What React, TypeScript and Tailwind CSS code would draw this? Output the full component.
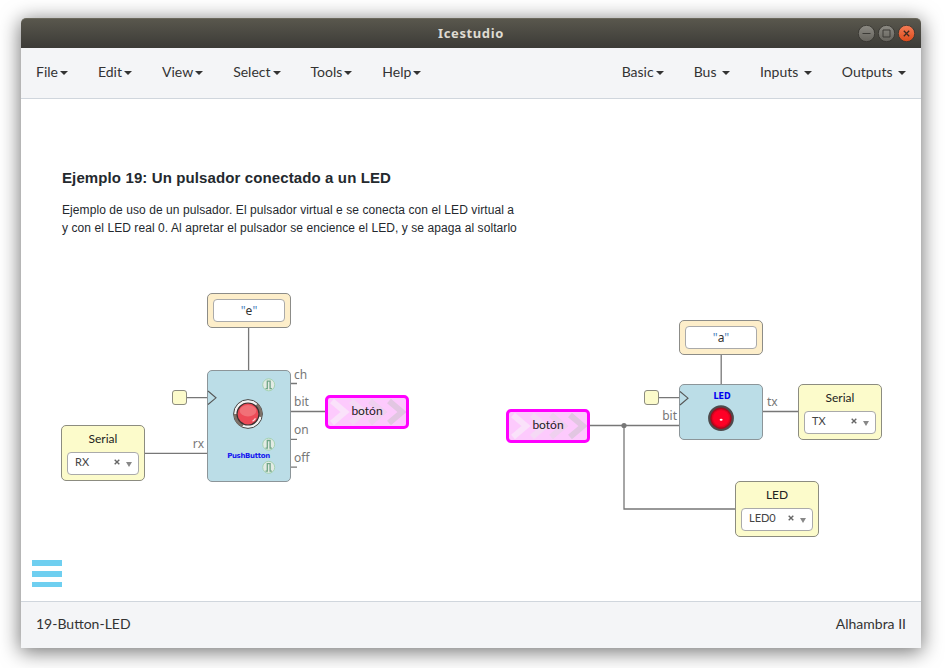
import React from "react";
import clsx from "clsx";

const lato = "font-['Lato','Liberation_Sans',sans-serif]";
const noto = "font-['Noto_Sans','Open_Sans',sans-serif]";

function Caret({ className }: { className?: string }) {
  return (
    <span
      className={clsx(
        "mt-[2px] h-0 w-0 border-x-4 border-t-4 border-x-transparent border-t-[#333]",
        className,
      )}
    />
  );
}

function MenuItem({ label, spaced }: { label: string; spaced?: boolean }) {
  return (
    <li className="flex items-center">
      <span>{label}</span>
      <Caret className={spaced ? "ml-[5.5px]" : "ml-[2px]"} />
    </li>
  );
}

function TitleBar() {
  return (
    <header className="relative flex h-[30px] items-center justify-end gap-[3px] rounded-t-[5px] border-t border-[#6a685c] bg-linear-to-b from-[#59574d] to-[#3c3b37] pr-[6px] pb-px">
      <h1
        className={clsx(
          noto,
          "absolute inset-0 text-center text-[13px] leading-[28px] font-bold tracking-[0.6px] text-[#dfdbd2]",
        )}
      >
        Icestudio
      </h1>
      {["min", "max", "close"].map((kind) => (
        <svg key={kind} width="17" height="17" viewBox="0 0 17 17" fill="none">
          <defs>
            <linearGradient id={kind} x1="0" y1="0" x2="0" y2="1">
              <stop offset="0" stopColor={kind === "close" ? "#f57d57" : "#8d8b84"} />
              <stop offset="1" stopColor={kind === "close" ? "#dc4a1a" : "#64625c"} />
            </linearGradient>
          </defs>
          <circle cx="8.5" cy="8.5" r="8.2" fill={`url(#${kind})`} stroke="#35342f" strokeWidth=".8" />
          {kind === "min" && <path d="M4.5 8.5h8" stroke="#3c3b37" />}
          {kind === "max" && <path d="M5 5h7v7H5z" stroke="#3c3b37" />}
          {kind === "close" && (
            <path d="M5.8 5.8l5.4 5.4M11.2 5.8l-5.4 5.4" stroke="#3c2a20" strokeWidth="1.3" />
          )}
        </svg>
      ))}
    </header>
  );
}

function MenuBar() {
  return (
    <nav
      className={clsx(
        lato,
        "flex h-[51px] items-center justify-between border-b border-[#d0d6dd] bg-[#f4f5f7] px-[15px] pb-[3px] text-[14px] text-[#333]",
      )}
    >
      <ul className="flex gap-[30px]">
        {["File", "Edit", "View", "Select", "Tools", "Help"].map((l) => (
          <MenuItem key={l} label={l} />
        ))}
      </ul>
      <ul className="flex gap-[30px]">
        <MenuItem label="Basic" />
        <MenuItem label="Bus" spaced />
        <MenuItem label="Inputs" spaced />
        <MenuItem label="Outputs" spaced />
      </ul>
    </nav>
  );
}

function ConstantNode({ value, className }: { value: string; className: string }) {
  return (
    <div
      className={clsx(
        "absolute h-[35px] w-[84px] rounded-[5px] border border-[#8c8c88] bg-[#fdeeca] p-[5px]",
        className,
      )}
    >
      <div
        className={clsx(
          noto,
          "flex h-full items-center justify-center rounded-[4px] border border-[#aaa] bg-white pt-px text-[12px] leading-none text-[#333]",
        )}
      >
        <span className="text-[#4a83bd]">"</span>
        {value}
        <span className="text-[#4a83bd]">"</span>
      </div>
    </div>
  );
}

function PinNode({ title, pin, className }: { title: string; pin: string; className: string }) {
  return (
    <div
      className={clsx(
        lato,
        "absolute flex h-[56px] w-[84px] flex-col rounded-[5px] border border-[#8c8c80] bg-[#fcfbcb] px-[5px]",
        className,
      )}
    >
      <span className="h-[26px] text-center text-[12px] leading-[25px] text-[#222]">{title}</span>
      <div className="flex h-[23px] items-center rounded-[4px] border border-[#aaa] bg-white pr-[6px] pl-[7px] text-[11px] leading-none text-[#444]">
        <span className="-mt-[4px] flex-1">{pin}</span>
        <svg width="6" height="6" viewBox="0 0 6 6" className="mt-[-3px] mr-[6px]">
          <path d="M.7.7l4.6 4.6M5.3.7L.7 5.3" stroke="#666" strokeWidth="1.4" />
        </svg>
        <span className="mt-[2px] h-0 w-0 border-x-[3.5px] border-t-[5px] border-x-transparent border-t-[#888]" />
      </div>
    </div>
  );
}

function LabelNode({ text, className }: { text: string; className: string }) {
  return (
    <div
      className={clsx(
        "absolute h-[34px] w-[84px] rounded-[5px] border-[3px] border-[#f0f] bg-[#fdcafd]",
        className,
      )}
    >
      <svg width="78" height="28" viewBox="0 0 78 28" fill="none" strokeWidth="6" className="absolute top-0 left-0">
        <path d="M4 3l13 11L4 25" stroke="#fae2fa" />
        <path d="M23 3l13 11-13 11" stroke="#f5d9f5" />
        <path d="M42 3l13 11-13 11" stroke="#efd0ef" />
        <path d="M61 3l13 11-13 11" stroke="#e2c6e2" />
      </svg>
      <span className={clsx(lato, "relative block text-center text-[12px] leading-[25px] text-[#222]")}>
        {text}
      </span>
    </div>
  );
}

function PortLabel({ text, className }: { text: string; className: string }) {
  return (
    <span className={clsx(noto, "absolute text-[12px] leading-[14px] text-[#777]", className)}>
      {text}
    </span>
  );
}

function Wires() {
  return (
    <svg className="absolute inset-0" width="900" height="502" viewBox="21 99 900 502" fill="none">
      <g stroke="#777" strokeWidth="1.3">
        <path d="M248.6 328v42M721.2 355v29" />
        <path d="M186 397.7h21M659 397.7h20" />
        <path d="M144 453.3h63M290 411.5h36M290 383.5h7M290 439.4h7M290 467.2h7" />
        <path d="M590 425.5h89M624 425.5v83.5h112M762 411.5h36" />
      </g>
      <circle cx="624" cy="425.5" r="2.6" fill="#777" />
    </svg>
  );
}

function Pulse({ y }: { y: number }) {
  return (
    <g transform={`translate(61.7 ${y})`}>
      <circle r="6" fill="#e3ebe4" stroke="#9fd0ae" strokeWidth=".9" />
      <path d="M-3.2 3.9h1.8v-7.6h2.8v7.6h1.8" stroke="#6fa586" strokeWidth="1.3" fill="none" />
    </g>
  );
}

function PushButtonNode() {
  return (
    <div className="absolute top-[271px] left-[186px] h-[112px] w-[84px] rounded-[5px] border border-[#8c9599] bg-[#bbdde7]">
      <svg width="84" height="111" viewBox="0 0 84 111" className="absolute -top-px -left-px" fill="none">
        <path d="M1 21l8 6.8L1 34.5" stroke="#555" strokeWidth="1.1" />
        <Pulse y={14.8} />
        <Pulse y={74.2} />
        <Pulse y={97.3} />
        <g transform="translate(41 44)">
          <circle r="14.4" fill="#f2f2f2" stroke="#444" strokeWidth="1" />
          <path d="M-12.6 0A12.6 12.6 0 0 0 -5 11.6" stroke="#7d7067" strokeWidth="3.2" />
          <path d="M8.5 -9.3A12.6 12.6 0 0 1 12.3 2.8" stroke="#7d7067" strokeWidth="3.2" />
          <circle r="11" fill="#ed4a57" stroke="#3c3030" strokeWidth="1.2" />
          <ellipse cy="-3.2" rx="8.3" ry="5.7" fill="#f17077" />
          <path d="M4.5 7.2A9 9 0 0 0 7.5 4.4" stroke="#fbd5d8" strokeWidth="1.2" />
        </g>
      </svg>
      <span className="absolute top-[80px] left-0 w-[81px] text-center font-['DejaVu_Sans',sans-serif] text-[7px] leading-[10px] font-bold tracking-[-0.35px] text-[#1414f0]">
        PushButton
      </span>
    </div>
  );
}

function LedNode() {
  return (
    <div className="absolute top-[285px] left-[658px] h-[56px] w-[84px] rounded-[5px] border border-[#8c9599] bg-[#bbdde7]">
      <svg width="84" height="56" viewBox="0 0 84 56" className="absolute -top-px -left-px" fill="none">
        <path d="M1 7.5l8 6.7L1 21" stroke="#555" strokeWidth="1.1" />
        <circle cx="42" cy="34.2" r="11.8" fill="#a80a1e" stroke="#4d4a4c" strokeWidth="2.2" />
        <circle cx="42" cy="34.2" r="9.3" fill="#e00422" />
        <circle cx="42" cy="34.2" r="8" fill="#ff0026" />
        <ellipse cx="42.1" cy="35.8" rx="1.5" ry="1" fill="#fff" />
      </svg>
      <span className="absolute top-[7px] left-[1px] w-full text-center font-['DejaVu_Sans',sans-serif] text-[8px] leading-[10px] font-bold text-[#0000f0]">
        LED
      </span>
    </div>
  );
}

function Canvas() {
  return (
    <main className="relative flex-1 overflow-hidden bg-white">
      <section className="pt-[70px] pl-[41px] font-['Liberation_Sans',Arial,sans-serif] text-[#24292e]">
        <h2 className="text-[15px] leading-[18px] font-bold tracking-[0.115px]">
          Ejemplo 19: Un pulsador conectado a un LED
        </h2>
        <p className="mt-[14px] text-[12px] leading-[18px] tracking-[0.077px] whitespace-nowrap">
          Ejemplo de uso de un pulsador. El pulsador virtual e se conecta con el LED virtual a
          <br />y con el LED real 0. Al apretar el pulsador se encience el LED, y se apaga al soltarlo
        </p>
      </section>

      <Wires />
      <ConstantNode value="e" className="top-[194px] left-[186px]" />
      <ConstantNode value="a" className="top-[221px] left-[658px]" />
      <PushButtonNode />
      <LedNode />
      <PinNode title="Serial" pin="RX" className="top-[326px] left-[40px]" />
      <PinNode title="Serial" pin="TX" className="top-[285px] left-[777px]" />
      <PinNode title="LED" pin="LED0" className="top-[382px] left-[714px]" />
      <LabelNode text="botón" className="top-[296px] left-[304px]" />
      <LabelNode text="botón" className="top-[310px] left-[485px]" />
      <span className="absolute top-[291px] left-[151px] h-[15px] w-[15px] rounded-[3px] border border-[#8c8c80] bg-[#fcfbcb]" />
      <span className="absolute top-[291px] left-[623px] h-[15px] w-[15px] rounded-[3px] border border-[#8c8c80] bg-[#fcfbcb]" />

      <PortLabel text="ch" className="top-[269px] left-[273px]" />
      <PortLabel text="bit" className="top-[296px] left-[273px]" />
      <PortLabel text="on" className="top-[324px] left-[273px]" />
      <PortLabel text="off" className="top-[352px] left-[273px]" />
      <PortLabel text="rx" className="top-[338px] right-[717px]" />
      <PortLabel text="bit" className="top-[310px] right-[244px]" />
      <PortLabel text="tx" className="top-[296px] left-[746px]" />

      <div className="absolute top-[461px] left-[11px] flex w-[30px] flex-col gap-[5px]">
        <span className="h-[6px] bg-[#6fcff0]" />
        <span className="h-[6px] bg-[#6fcff0]" />
        <span className="h-[5px] bg-[#6fcff0]" />
      </div>
    </main>
  );
}

export default function App() {
  return (
    <div className="h-[668px] w-[945px] overflow-hidden bg-white pt-[18px] pl-[21px]">
      <div className="flex h-[630px] w-[900px] flex-col rounded-t-[5px] shadow-[0_3px_20px_1px_rgba(0,0,0,0.55)]">
        <TitleBar />
        <MenuBar />
        <Canvas />
        <footer
          className={clsx(
            lato,
            "flex h-[47px] items-center justify-between border-t border-[#d0d6dd] bg-[#f4f5f7] px-[15px] pb-[3px] text-[14px] text-[#333]",
          )}
        >
          <span>19-Button-LED</span>
          <span>Alhambra II</span>
        </footer>
      </div>
    </div>
  );
}
